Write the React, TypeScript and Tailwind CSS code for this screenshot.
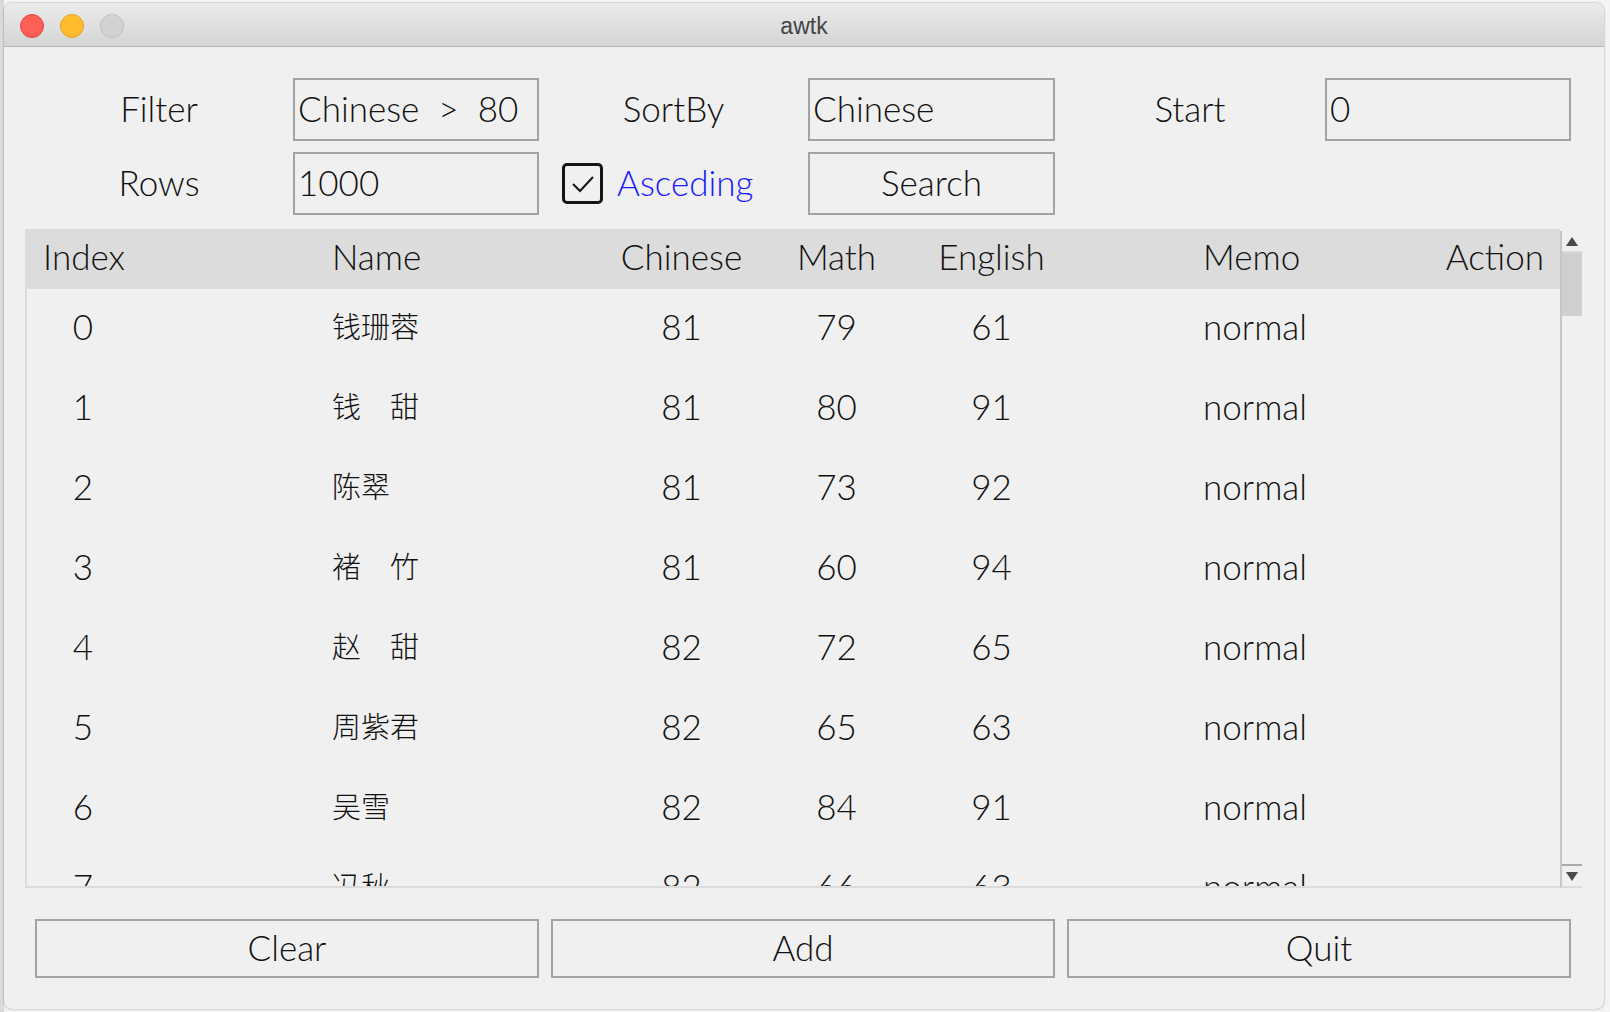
import React from "react";

const rows = [
  ["0", "钱珊蓉", "81", "79", "61", "normal"],
  ["1", "钱\u3000甜", "81", "80", "91", "normal"],
  ["2", "陈翠", "81", "73", "92", "normal"],
  ["3", "褚\u3000竹", "81", "60", "94", "normal"],
  ["4", "赵\u3000甜", "82", "72", "65", "normal"],
  ["5", "周紫君", "82", "65", "63", "normal"],
  ["6", "吴雪", "82", "84", "91", "normal"],
  ["7", "冯秋", "82", "66", "63", "normal"],
];

const font = "font-['Lato','Noto_Sans_CJK_SC',sans-serif] font-light";

function Label({ children }: { children: React.ReactNode }) {
  return (
    <div className="flex items-center justify-center pb-[2px] text-[35px] text-[#111]">
      {children}
    </div>
  );
}

function Field({ value }: { value: string }) {
  return (
    <div className="flex items-center border-2 border-[#a3a3a3] pl-[3px] pb-[2px] text-[35px] text-[#111] whitespace-pre">
      {value}
    </div>
  );
}

function Button({ children }: { children: React.ReactNode }) {
  return (
    <div className="flex items-center justify-center border-2 border-[#a3a3a3] pb-[2px] text-[35px] text-[#111]">
      {children}
    </div>
  );
}

const cols =
  "grid grid-cols-[305px_272px_155px_155px_155px_313px_1fr] items-center";

export default function App() {
  return (
    <div className={`w-[1610px] h-[1012px] bg-[#f4f4f4] flex overflow-hidden ${font}`}>
      <div className="w-[4px] h-full bg-[#dadada]" />
      <div className="mt-[3px] w-[1600px] h-[1006px] flex flex-col rounded-[8px] overflow-hidden bg-[#f0f0f0] shadow-[0_0_2px_rgba(0,0,0,0.45)]">
        {/* title bar */}
        <div className="relative h-[44px] shrink-0 bg-gradient-to-b from-[#ebebeb] to-[#d5d5d5] border-b border-[#b3b3b3] flex items-center justify-center">
          <div className="absolute left-[16px] top-[11px] flex gap-[16px]">
            <div className="w-[24px] h-[24px] rounded-full bg-[#fd5f57] border border-[#e2463f]" />
            <div className="w-[24px] h-[24px] rounded-full bg-[#febc2e] border border-[#e1a325]" />
            <div className="w-[24px] h-[24px] rounded-full bg-[#d2d2d2] border border-[#bdbdbd]" />
          </div>
          <span className="font-['Liberation_Sans',sans-serif] font-normal text-[23px] text-[#444] mt-[3px]">
            awtk
          </span>
        </div>

        {/* content */}
        <div className="flex-1 flex flex-col pl-[21px] pt-[31px]">
          <div className="grid grid-cols-[268px_246px_269px_247px_270px_246px] grid-rows-[63px_63px] gap-y-[11px]">
            <Label>Filter</Label>
            <Field value="Chinese  >  80" />
            <Label>SortBy</Label>
            <Field value="Chinese" />
            <Label>Start</Label>
            <Field value="0" />

            <Label>Rows</Label>
            <Field value="1000" />
            <div className="flex items-center gap-[14px] pl-[23px]">
              <div className="w-[41px] h-[41px] shrink-0 rounded-[5px] border-[3px] border-[#151515] flex items-center justify-center">
                <svg width="26" height="22" viewBox="0 0 26 22" fill="none">
                  <path d="M3 11 L10 18 L23 4" stroke="#151515" strokeWidth="2" />
                </svg>
              </div>
              <span className="pb-[2px] text-[35px] text-[#1a1aff]">Asceding</span>
            </div>
            <Button>Search</Button>
          </div>

          {/* table */}
          <div className="mt-[14px] w-[1557px] h-[659px] flex text-[35px] text-[#111]">
            <div className="flex-1 flex flex-col border-l-2 border-b-2 border-[#dcdcdc] overflow-hidden">
              <div className={`${cols} h-[60px] pb-[6px] shrink-0 bg-[#dcdcdc]`}>
                <div className="w-[114px] text-center">Index</div>
                <div>Name</div>
                <div className="text-center">Chinese</div>
                <div className="text-center">Math</div>
                <div className="text-center">English</div>
                <div className="pl-[134px]">Memo</div>
                <div className="text-right pr-[16px]">Action</div>
              </div>
              <div className="flex-1 overflow-hidden">
                {rows.map((r) => (
                  <div key={r[0]} className={`${cols} h-[80px] pb-[6px]`}>
                    <div className="w-[112px] text-center">{r[0]}</div>
                    <div className="font-['Noto_Sans_CJK_SC',sans-serif] font-light text-[29px]">{r[1]}</div>
                    <div className="text-center">{r[2]}</div>
                    <div className="text-center">{r[3]}</div>
                    <div className="text-center">{r[4]}</div>
                    <div className="pl-[134px]">{r[5]}</div>
                    <div />
                  </div>
                ))}
              </div>
            </div>
            {/* scrollbar */}
            <div className="w-[22px] mt-[2px] flex flex-col border-l-2 border-[#c6c6c6] border-b-2 border-b-[#dcdcdc] bg-[#f0f0f0]">
              <div className="h-[22px] shrink-0 flex items-center justify-center border-b-2 border-[#d8d8d8]">
                <svg width="14" height="11" viewBox="0 0 14 11">
                  <path d="M7 1 L13 10 L1 10 Z" fill="#4a4a4a" />
                </svg>
              </div>
              <div className="h-[63px] shrink-0 bg-[#cfcfcf]" />
              <div className="flex-1" />
              <div className="h-[22px] shrink-0 flex items-center justify-center border-t-2 border-[#a9a9a9]">
                <svg width="14" height="11" viewBox="0 0 14 11">
                  <path d="M1 1 L13 1 L7 10 Z" fill="#4a4a4a" />
                </svg>
              </div>
            </div>
          </div>

          {/* buttons */}
          <div className="mt-[31px] ml-[10px] w-[1536px] h-[59px] grid grid-cols-3 gap-[12px]">
            <Button>Clear</Button>
            <Button>Add</Button>
            <Button>Quit</Button>
          </div>
        </div>
      </div>
    </div>
  );
}
